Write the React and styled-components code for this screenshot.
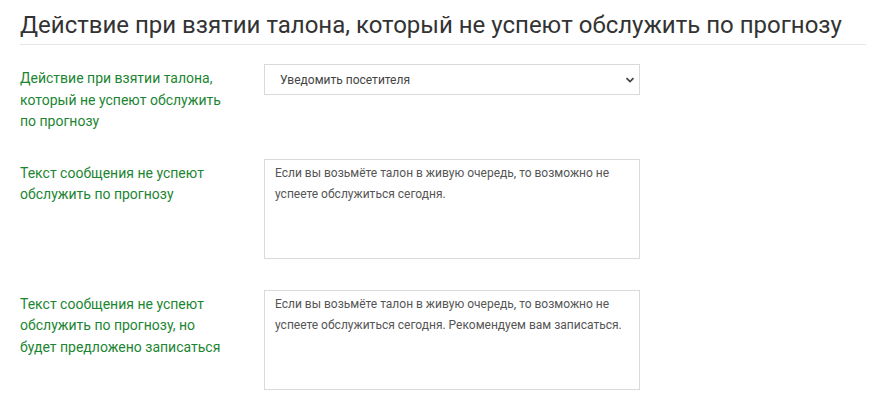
import React from 'react';
import styled, { createGlobalStyle } from 'styled-components';

const GlobalStyle = createGlobalStyle`
  body {
    margin: 0;
    background: #fff;
    font-family: Roboto, "Liberation Sans", Arial, sans-serif;
  }
`;

const rows = [
  {
    label: 'Действие при взятии талона, который не успеют обслужить по прогнозу',
    type: 'select',
    value: 'Уведомить посетителя',
    space: 26,
  },
  {
    label: 'Текст сообщения не успеют обслужить по прогнозу',
    type: 'text',
    value: 'Если вы возьмёте талон в живую очередь, то возможно не успеете обслужиться сегодня.',
    space: 31,
  },
  {
    label: 'Текст сообщения не успеют обслужить по прогнозу, но будет предложено записаться',
    type: 'text',
    value:
      'Если вы возьмёте талон в живую очередь, то возможно не успеете обслужиться сегодня. Рекомендуем вам записаться.',
    space: 0,
  },
];

const App = () => (
  <Page>
    <GlobalStyle />
    <Title>Действие при взятии талона, который не успеют обслужить по прогнозу</Title>
    <Form>
      {rows.map((row, i) => (
        <Row key={i} $space={row.space}>
          <Label>{row.label}</Label>
          {row.type === 'select' ? (
            <SelectBox>
              <span>{row.value}</span>
              <svg width="12" height="12" viewBox="0 0 12 12">
                <path d="M2.5 4.2 L6 7.6 L9.5 4.2" fill="none" stroke="#444" strokeWidth="1.8" />
              </svg>
            </SelectBox>
          ) : (
            <TextArea defaultValue={row.value} />
          )}
        </Row>
      ))}
    </Form>
  </Page>
);

const Page = styled.div`
  padding: 10px 10px 0 20px;
`;

const Title = styled.h2`
  margin: 0;
  padding-bottom: 4px;
  border-bottom: 1px solid #e6e6e6;
  font-size: 24px;
  font-weight: 400;
  line-height: 30px;
  color: #333;
`;

const Form = styled.div`
  display: flex;
  flex-direction: column;
  padding-top: 19px;
`;

const Row = styled.div`
  display: grid;
  grid-template-columns: 244px 376px;
  align-items: start;
  margin-bottom: ${(p) => p.$space}px;
`;

const Label = styled.div`
  width: 210px;
  padding-top: 4px;
  font-size: 14px;
  line-height: 21.5px;
  color: #1c8532;
`;

const SelectBox = styled.div`
  box-sizing: border-box;
  height: 31px;
  display: flex;
  align-items: center;
  justify-content: space-between;
  padding: 0 3px 0 15px;
  border: 1px solid #d9d9d9;
  font-size: 12px;
  color: #444;
`;

const TextArea = styled.textarea`
  box-sizing: border-box;
  width: 376px;
  height: 100px;
  margin: 0;
  padding: 3px 10px;
  border: 1px solid #d9d9d9;
  border-radius: 0;
  resize: none;
  outline: none;
  font-family: Roboto, "Liberation Sans", Arial, sans-serif;
  font-size: 12px;
  line-height: 21px;
  color: #555;
`;

export default App;
